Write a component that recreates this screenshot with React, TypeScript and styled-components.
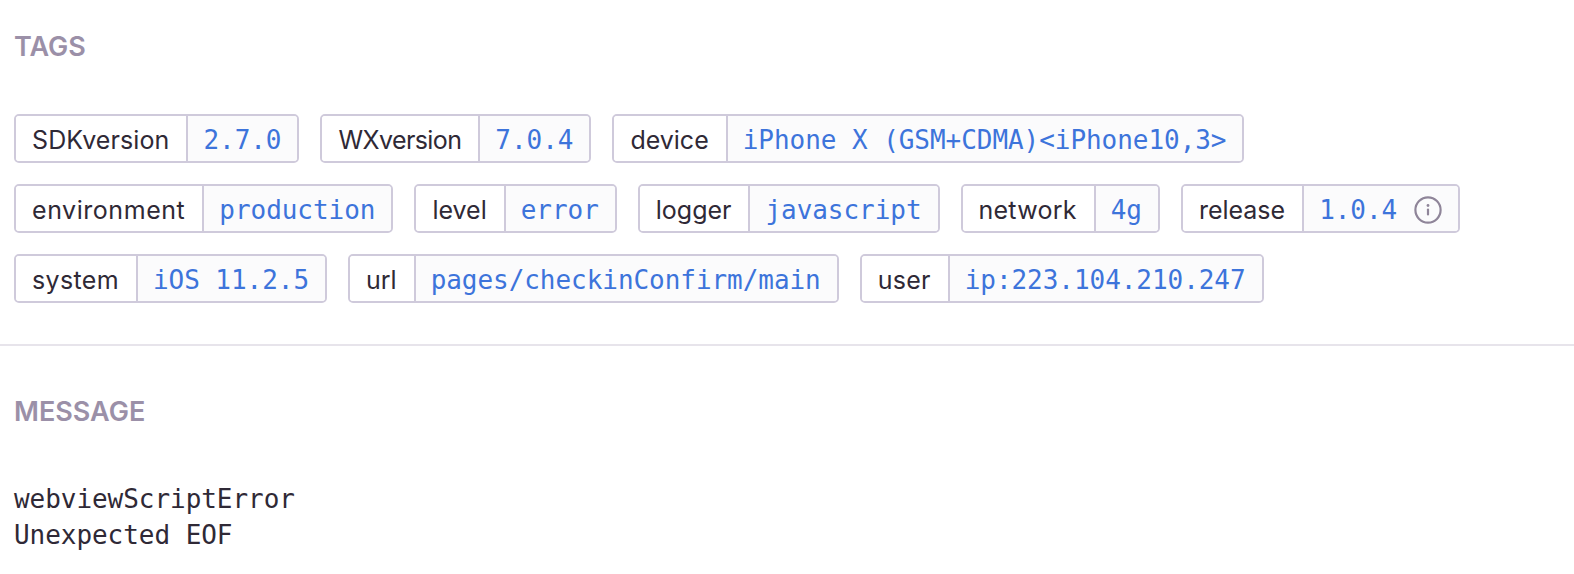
import React from 'react';
import styled, { createGlobalStyle } from 'styled-components';

const GlobalStyle = createGlobalStyle`
	html, body {
		margin: 0;
		background: #fff;
	}
	body {
		font-family: 'Inter', 'Liberation Sans', sans-serif;
		color: #2f2936;
	}
`;

const Page = styled.div`
	width: 1574px;
	height: 574px;
	overflow: hidden;
`;

const Section = styled.section`
	padding: 0 14px;
`;

const TagsSection = styled(Section)`
	padding-top: 33px;
	padding-bottom: 41px;
	border-bottom: 2px solid #e7e4eb;
`;

const MessageSection = styled(Section)`
	padding-top: 52px;
`;

const Heading = styled.h3`
	margin: 0;
	font-size: 27px;
	line-height: 28px;
	font-weight: 600;
	color: #9b90a8;
	text-transform: uppercase;
`;

const TagList = styled.ul`
	display: flex;
	flex-wrap: wrap;
	gap: 21px;
	margin: 53px 0 0;
	padding: 0;
	list-style: none;
`;

const Tag = styled.li`
	display: flex;
	height: 49px;
	box-sizing: border-box;
	border: 2px solid #cfcadb;
	border-radius: 5px;
	overflow: hidden;
`;

const TagKey = styled.span<{ $tracking?: number }>`
	display: flex;
	align-items: center;
	padding: 2px 17px 0 16px;
	font-size: 25px;
	letter-spacing: ${(p) => p.$tracking ?? 0}px;
	color: #2f2936;
	background: #fff;
	border-right: 2px solid #cfcadb;
`;

const TagValue = styled.span`
	display: flex;
	align-items: center;
	gap: 17px;
	padding: 2px 16px 0 15px;
	font-family: 'DejaVu Sans Mono', 'Liberation Mono', monospace;
	font-size: 26px;
	letter-spacing: -0.05px;
	color: #3d74db;
	background: #fbfbfc;
`;

const InfoIcon = styled.svg`
	width: 28px;
	height: 28px;
	flex: none;
	color: #8f8599;
`;

const Message = styled.pre`
	margin: 55px 0 0;
	font-family: 'DejaVu Sans Mono', 'Liberation Mono', monospace;
	font-size: 26px;
	line-height: 36px;
	letter-spacing: -0.05px;
	color: #2f2936;
`;

type TagData = { name: string; value: string; info?: boolean; tracking?: number };

const tags: TagData[] = [
	{ name: 'SDKversion', value: '2.7.0', tracking: 0.1 },
	{ name: 'WXversion', value: '7.0.4', tracking: -0.6 },
	{ name: 'device', value: 'iPhone X (GSM+CDMA)<iPhone10,3>' },
	{ name: 'environment', value: 'production', tracking: 0.55 },
	{ name: 'level', value: 'error' },
	{ name: 'logger', value: 'javascript' },
	{ name: 'network', value: '4g', tracking: 0.25 },
	{ name: 'release', value: '1.0.4', info: true },
	{ name: 'system', value: 'iOS 11.2.5', tracking: 0.35 },
	{ name: 'url', value: 'pages/checkinConfirm/main' },
	{ name: 'user', value: 'ip:223.104.210.247', tracking: 0.25 },
];

const Info = () => (
	<InfoIcon viewBox="0 0 28 28" fill="none" stroke="currentColor">
		<circle cx="14" cy="14" r="12.6" strokeWidth="2.2" />
		<line x1="14" y1="13.5" x2="14" y2="18.5" strokeWidth="2.2" strokeLinecap="round" />
		<circle cx="14" cy="9.5" r="1.4" fill="currentColor" stroke="none" />
	</InfoIcon>
);

export default function App() {
	return (
		<Page>
			<GlobalStyle />
			<TagsSection>
				<Heading>Tags</Heading>
				<TagList>
					{tags.map((tag) => (
						<Tag key={tag.name}>
							<TagKey $tracking={tag.tracking}>{tag.name}</TagKey>
							<TagValue>
								{tag.value}
								{tag.info && <Info />}
							</TagValue>
						</Tag>
					))}
				</TagList>
			</TagsSection>
			<MessageSection>
				<Heading>Message</Heading>
				<Message>{'webviewScriptError\nUnexpected EOF'}</Message>
			</MessageSection>
		</Page>
	);
}
